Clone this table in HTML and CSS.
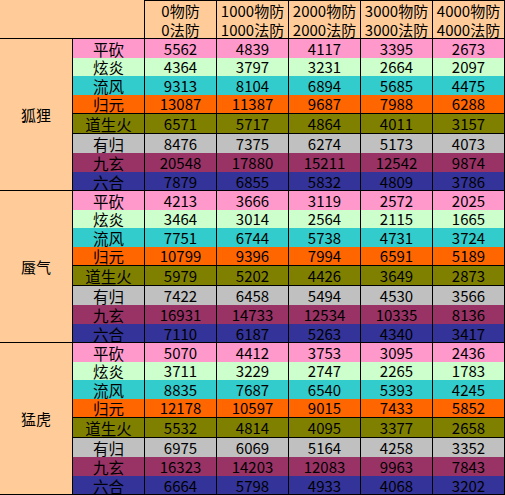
FILE: index.html
```html
<!DOCTYPE html>
<html>
<head>
<meta charset="utf-8">
<link rel="stylesheet" href="styles.css">
</head>
<body>
<div class="sheet">
  <div class="head">
    <div class="corner"></div>
    <div class="hc">0物防<br>0法防</div>
    <div class="hc">1000物防<br>1000法防</div>
    <div class="hc">2000物防<br>2000法防</div>
    <div class="hc">3000物防<br>3000法防</div>
    <div class="hc last">4000物防<br>4000法防</div>
  </div>

  <div class="grp">
    <div class="name">狐狸</div>
    <div class="pk sk">平砍</div><div class="pk">5562</div><div class="pk">4839</div><div class="pk">4117</div><div class="pk">3395</div><div class="pk last">2673</div>
    <div class="xy sk">炫炎</div><div class="xy">4364</div><div class="xy">3797</div><div class="xy">3231</div><div class="xy">2664</div><div class="xy last">2097</div>
    <div class="lf sk">流风</div><div class="lf">9313</div><div class="lf">8104</div><div class="lf">6894</div><div class="lf">5685</div><div class="lf last">4475</div>
    <div class="gy sk">归元</div><div class="gy">13087</div><div class="gy">11387</div><div class="gy">9687</div><div class="gy">7988</div><div class="gy last">6288</div>
    <div class="ds sk">道生火</div><div class="ds">6571</div><div class="ds">5717</div><div class="ds">4864</div><div class="ds">4011</div><div class="ds last">3157</div>
    <div class="yg sk">有归</div><div class="yg">8476</div><div class="yg">7375</div><div class="yg">6274</div><div class="yg">5173</div><div class="yg last">4073</div>
    <div class="jx sk">九玄</div><div class="jx">20548</div><div class="jx">17880</div><div class="jx">15211</div><div class="jx">12542</div><div class="jx last">9874</div>
    <div class="lh sk">六合</div><div class="lh">7879</div><div class="lh">6855</div><div class="lh">5832</div><div class="lh">4809</div><div class="lh last">3786</div>
  </div>

  <div class="grp">
    <div class="name">蜃气</div>
    <div class="pk sk">平砍</div><div class="pk">4213</div><div class="pk">3666</div><div class="pk">3119</div><div class="pk">2572</div><div class="pk last">2025</div>
    <div class="xy sk">炫炎</div><div class="xy">3464</div><div class="xy">3014</div><div class="xy">2564</div><div class="xy">2115</div><div class="xy last">1665</div>
    <div class="lf sk">流风</div><div class="lf">7751</div><div class="lf">6744</div><div class="lf">5738</div><div class="lf">4731</div><div class="lf last">3724</div>
    <div class="gy sk">归元</div><div class="gy">10799</div><div class="gy">9396</div><div class="gy">7994</div><div class="gy">6591</div><div class="gy last">5189</div>
    <div class="ds sk">道生火</div><div class="ds">5979</div><div class="ds">5202</div><div class="ds">4426</div><div class="ds">3649</div><div class="ds last">2873</div>
    <div class="yg sk">有归</div><div class="yg">7422</div><div class="yg">6458</div><div class="yg">5494</div><div class="yg">4530</div><div class="yg last">3566</div>
    <div class="jx sk">九玄</div><div class="jx">16931</div><div class="jx">14733</div><div class="jx">12534</div><div class="jx">10335</div><div class="jx last">8136</div>
    <div class="lh sk">六合</div><div class="lh">7110</div><div class="lh">6187</div><div class="lh">5263</div><div class="lh">4340</div><div class="lh last">3417</div>
  </div>

  <div class="grp">
    <div class="name">猛虎</div>
    <div class="pk sk">平砍</div><div class="pk">5070</div><div class="pk">4412</div><div class="pk">3753</div><div class="pk">3095</div><div class="pk last">2436</div>
    <div class="xy sk">炫炎</div><div class="xy">3711</div><div class="xy">3229</div><div class="xy">2747</div><div class="xy">2265</div><div class="xy last">1783</div>
    <div class="lf sk">流风</div><div class="lf">8835</div><div class="lf">7687</div><div class="lf">6540</div><div class="lf">5393</div><div class="lf last">4245</div>
    <div class="gy sk">归元</div><div class="gy">12178</div><div class="gy">10597</div><div class="gy">9015</div><div class="gy">7433</div><div class="gy last">5852</div>
    <div class="ds sk">道生火</div><div class="ds">5532</div><div class="ds">4814</div><div class="ds">4095</div><div class="ds">3377</div><div class="ds last">2658</div>
    <div class="yg sk">有归</div><div class="yg">6975</div><div class="yg">6069</div><div class="yg">5164</div><div class="yg">4258</div><div class="yg last">3352</div>
    <div class="jx sk">九玄</div><div class="jx">16323</div><div class="jx">14203</div><div class="jx">12083</div><div class="jx">9963</div><div class="jx last">7843</div>
    <div class="lh sk">六合</div><div class="lh">6664</div><div class="lh">5798</div><div class="lh">4933</div><div class="lh">4068</div><div class="lh last">3202</div>
  </div>
</div>
</body>
</html>
```
FILE: styles.css
```css
html, body {
  margin: 0;
  padding: 0;
  background: #ffffff;
}
.sheet {
  width: 505px;
  display: flex;
  flex-direction: column;
  font-family: "Noto Sans CJK SC", "Noto Sans", sans-serif;
  font-size: 15px;
  color: #000;
}
.sheet div {
  box-sizing: border-box;
}
.head {
  display: grid;
  grid-template-columns: 144px 72px 72px 72px 72px 73px;
  height: 39px;
  background: #ffcc99;
  border-bottom: 1px solid #000;
}
.hc {
  border-left: 1px solid #000;
  border-top: 1px solid #000;
  text-align: center;
  line-height: 18.5px;
  padding-top: 1px;
  white-space: nowrap;
}
.hc.last {
  border-right: 1px solid #000;
}
.grp {
  display: grid;
  grid-template-columns: 72px 72px 72px 72px 72px 72px 73px;
  grid-template-rows: 18.5px 18.5px 18.5px 18.5px 21px 19px 19px 18px;
  border-bottom: 1px solid #000;
}
.grp > div {
  display: flex;
  align-items: center;
  justify-content: center;
  line-height: 18px;
  white-space: nowrap;
  border-left: 1px solid #000;
  padding-top: 1px;
}
.grp > div.last {
  border-right: 1px solid #000;
}
.grp > .name {
  grid-row: 1 / -1;
  background: #ffcc99;
  border-left: none;
  padding-top: 0;
}
.pk { background: #ff99cc; }
.xy { background: #ccffcc; }
.lf { background: #33cccc; }
.gy { background: #ff6600; }
.grp > .ds {
  background: #808000;
  border-top: 1px solid #000;
  border-bottom: 1px solid #000;
}
.yg { background: #c0c0c0; }
.jx { background: #993366; }
.lh { background: #333399; }
.sk { font-size: 15.5px; }
```
